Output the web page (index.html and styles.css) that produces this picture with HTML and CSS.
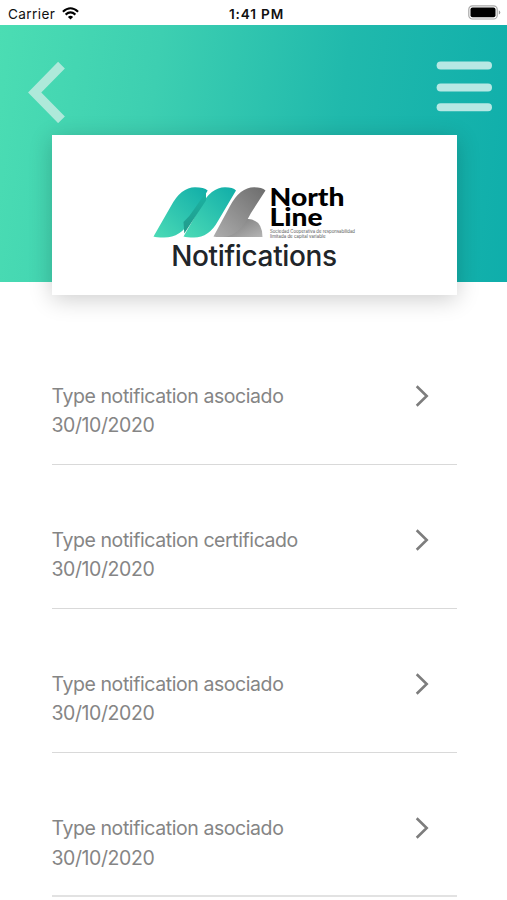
FILE: index.html
```html
<!DOCTYPE html>
<html lang="en">
<head>
<meta charset="utf-8">
<title>Notifications</title>
<link rel="stylesheet" href="styles.css">
</head>
<body>
<div class="status">
  <div class="carrier"><span>Carrier</span>
    <svg class="wifi" width="17" height="13" viewBox="0 0 17 13" fill="none" stroke="#000" stroke-width="2.1"><path d="M.9 4.7Q8.5-2.2 16.1 4.7M3.6 7.6q4.9-4.3 9.8 0"/><path d="M5.9 9.9q2.6-2.2 5.2 0L8.5 12.5Z" fill="#000" stroke="none"/></svg>
  </div>
  <div class="time">1:41 PM</div>
  <svg class="battery" width="33" height="15" viewBox="0 0 33 15"><rect x=".8" y=".8" width="28.4" height="13.2" rx="3.6" fill="#fff" stroke="#a8a8a8" stroke-width="1.2"/><rect x="2.5" y="2.5" width="25" height="9.8" rx="2" fill="#000"/><path d="M30.8 5.3q1.5.7 1.5 2.1t-1.5 2.1Z" fill="#999"/></svg>
</div>
<header class="hero">
  <nav class="nav">
    <svg class="back" width="38" height="62" viewBox="0 0 38 62" fill="none" stroke="#aee9da" stroke-width="9.5"><path d="M34.5 4.2 7.7 31.5 34.5 58.8"/></svg>
    <svg class="menu" width="56" height="51" viewBox="0 0 56 51" fill="#b7e8e4"><rect x=".6" y=".6" width="55.4" height="8" rx="4"/><rect x=".6" y="22.6" width="55.4" height="8" rx="4"/><rect x=".6" y="42.2" width="55.4" height="8" rx="4"/></svg>
  </nav>
  <section class="card">
    <svg class="logo" width="204" height="54" viewBox="152 186 204 54">
      <defs>
        <linearGradient id="teal" x1="0" y1="1" x2="1" y2="0"><stop offset="0" stop-color="#4cdbb6"/><stop offset="1" stop-color="#10ada8"/></linearGradient>
        <linearGradient id="fold" x1="0" y1="0" x2="0" y2="1"><stop offset="0" stop-color="#19b3a3"/><stop offset="1" stop-color="#239a8a"/></linearGradient>
        <linearGradient id="gray" x1="0" y1="1" x2="1" y2="0"><stop offset="0" stop-color="#adadad"/><stop offset="1" stop-color="#6c6c6c"/></linearGradient>
        <linearGradient id="foot" x1="0" y1="0" x2="1" y2="1"><stop offset="0" stop-color="#737373"/><stop offset="1" stop-color="#b5b5b5"/></linearGradient>
      </defs>
      <path d="M153.5 236.5 171 206Q181 187.2 195 187.2Q204 187.2 207.7 190.5L190 221Q181 237.5 164 237.5Q156 237.5 153.5 236.5Z" fill="url(#teal)"/>
      <path d="M183.5 236.5 201 206Q211 187.2 225 187.2Q233 187.2 236 190.5L218 221Q209 237.5 194 237.5Q187 237.5 183.5 236.5Z" fill="url(#teal)"/>
      <path d="M206 192V200.5Q197 214 184.3 233.5L183.5 222Q190 216 195 208Z" fill="url(#fold)"/>
      <path d="M247 218.8Q262.500 219.500 262.5 237H222Z" fill="url(#foot)"/>
      <path d="M213.5 236.5 230 206Q240 187.2 254 187.2Q262 187.2 265.5 190.5L251 213Q239 237 222 237Q215 237 213.5 236.5Z" fill="url(#gray)"/>
      <g class="brand"><text x="269.5" y="205.700" textLength="75" lengthAdjust="spacingAndGlyphs">North</text><text x="269.5" y="226.200" textLength="53" lengthAdjust="spacingAndGlyphs">Line</text></g>
      <g class="tagline"><text x="270" y="232.7" textLength="85" lengthAdjust="spacingAndGlyphs">Sociedad Cooperativa de responsabilidad</text><text x="270" y="238" textLength="55.5" lengthAdjust="spacingAndGlyphs">limitada de capital variable</text></g>
    </svg>
    <h1>Notifications</h1>
  </section>
</header>
<main class="list">
  <article class="item"><div><p>Type notification asociado</p><p>30/10/2020</p></div><svg class="chevron" width="16" height="24" viewBox="0 0 16 24"><path d="M2.7 2.3 12.7 12 2.7 21.7"/></svg></article>
  <article class="item"><div><p>Type notification certificado</p><p>30/10/2020</p></div><svg class="chevron" width="16" height="24" viewBox="0 0 16 24"><path d="M2.7 2.3 12.7 12 2.7 21.7"/></svg></article>
  <article class="item"><div><p>Type notification asociado</p><p>30/10/2020</p></div><svg class="chevron" width="16" height="24" viewBox="0 0 16 24"><path d="M2.7 2.3 12.7 12 2.7 21.7"/></svg></article>
  <article class="item last"><div><p>Type notification asociado</p><p>30/10/2020</p></div><svg class="chevron" width="16" height="24" viewBox="0 0 16 24"><path d="M2.7 2.3 12.7 12 2.7 21.7"/></svg></article>
</main>
</body>
</html>
```
FILE: styles.css
```css
* { box-sizing: border-box; }
body {
  margin: 0;
  height: 900px;
  overflow: hidden;
  background: #fff;
  font-family: Inter, "Liberation Sans", sans-serif;
}
.status {
  height: 25px;
  padding: 0 6px 0 8px;
  display: grid;
  grid-template-columns: 1fr auto 1fr;
  align-items: center;
  font-size: 13.6px;
  color: #111;
}
.carrier { display: flex; align-items: center; gap: 7px; padding-top: 2px; letter-spacing: .4px; }
.wifi { margin-top: -1px; }
.time { font-weight: 600; padding: 2px 0 0 4px; letter-spacing: .85px; }
.battery { justify-self: end; }
.hero {
  height: 256.5px;
  background: linear-gradient(98deg, #4bddb3 0%, #3dcfb1 30%, #20b9ac 65%, #0faeab 100%);
}
.nav {
  height: 110px;
  padding: 36px 15px 0 27px;
  display: flex;
  justify-content: space-between;
  align-items: flex-start;
}
.card {
  width: 405px;
  height: 160px;
  margin-left: 51.5px;
  padding-top: 51px;
  background: #fff;
  box-shadow: 0 4px 22px rgba(0, 0, 0, .2);
  display: flex;
  flex-direction: column;
  align-items: center;
}
.logo { flex: none; overflow: visible; }
.brand { font: 900 24px Lato, sans-serif; fill: #000; }
.tagline { font: 4.2px Inter, sans-serif; fill: #555; }
h1 {
  margin: 0;
  font-size: 28px;
  line-height: 32px;
  font-weight: 500;
  letter-spacing: -.35px;
  color: #212529;
}
.list { padding: 39px 50.5px 0 51.5px; }
.item {
  height: 144.1px;
  padding: 61.5px 27px 0 0;
  display: flex;
  justify-content: space-between;
  align-items: flex-start;
  border-bottom: 1px solid #d9d9d9;
}
.last { border-bottom: 2px solid #e2e2e2; }
.item p { margin: 0; font-size: 19.5px; line-height: 29.25px; letter-spacing: -.42px; color: #858585; }
.chevron { margin-top: 2px; fill: none; stroke: #7d7d7d; stroke-width: 2.6; }
```
